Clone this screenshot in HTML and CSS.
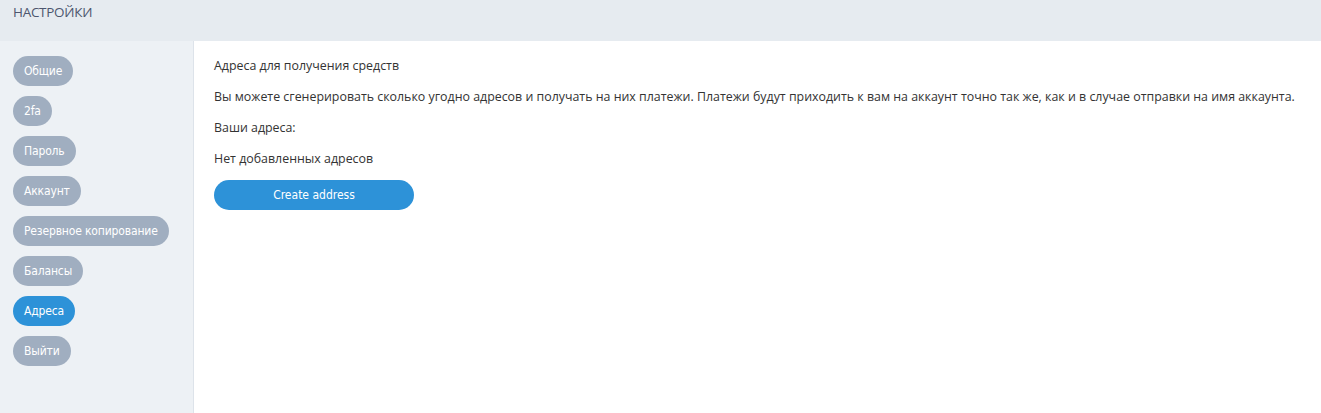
FILE: index.html
```html
<!DOCTYPE html>
<html lang="ru">
<head>
<meta charset="utf-8">
<title>Настройки</title>
<link rel="stylesheet" href="styles.css">
</head>
<body>
<div class="page">
  <header class="topbar">
    <h1 class="title">НАСТРОЙКИ</h1>
  </header>
  <div class="main">
    <nav class="sidebar">
      <a class="pill">Общие</a>
      <a class="pill">2fa</a>
      <a class="pill">Пароль</a>
      <a class="pill">Аккаунт</a>
      <a class="pill">Резервное копирование</a>
      <a class="pill">Балансы</a>
      <a class="pill active">Адреса</a>
      <a class="pill">Выйти</a>
    </nav>
    <section class="content">
      <p class="line">Адреса для получения средств</p>
      <p class="line">Вы можете сгенерировать сколько угодно адресов и получать на них платежи. Платежи будут приходить к вам на аккаунт точно так же, как и в случае отправки на имя аккаунта.</p>
      <p class="line">Ваши адреса:</p>
      <p class="line last">Нет добавленных адресов</p>
      <button class="create">Create address</button>
    </section>
  </div>
</div>
</body>
</html>
```
FILE: styles.css
```css
* { box-sizing: border-box; }
html, body { margin: 0; padding: 0; height: 100%; }
body {
  font-family: "Open Sans", "DejaVu Sans", sans-serif;
  color: #333;
  background: #fff;
}
.page { display: flex; flex-direction: column; height: 100%; }
.topbar {
  height: 41px;
  background: #e6ebf0;
  padding: 0 13px;
  flex: none;
}
.title {
  margin: 0;
  padding-top: 3px;
  font-family: "Open Sans", sans-serif;
  font-weight: normal;
  font-size: 13.5px;
  letter-spacing: -0.3px;
  line-height: 18px;
  color: #4d566e;
}
.main { flex: 1; display: flex; }
.sidebar {
  width: 194px;
  flex: none;
  background: #edf1f5;
  border-right: 1px solid #dde3ea;
  padding: 15px 0 0 13px;
  display: flex;
  flex-direction: column;
  align-items: flex-start;
  gap: 10px;
}
.pill {
  height: 30px;
  line-height: 30px;
  padding: 0 11px;
  border-radius: 15px;
  background: #a0aec0;
  color: #fff;
  font-family: "DejaVu Sans Condensed", "DejaVu Sans", sans-serif;
  font-size: 12px;
  letter-spacing: -0.15px;
  cursor: pointer;
}
.pill.active { background: #2d92d8; }
.content {
  flex: 1;
  padding: 16px 20px 0 20px;
}
.line {
  margin: 0 0 13px 0;
  font-size: 12.4px;
  line-height: 18px;
  color: #333;
}
.line.last { margin-bottom: 12px; }
.create {
  display: block;
  width: 200px;
  height: 30px;
  border: none;
  border-radius: 15px;
  background: #2d92d8;
  color: #fff;
  font-family: "DejaVu Sans Condensed", "DejaVu Sans", sans-serif;
  font-size: 12px;
  cursor: pointer;
}
```
